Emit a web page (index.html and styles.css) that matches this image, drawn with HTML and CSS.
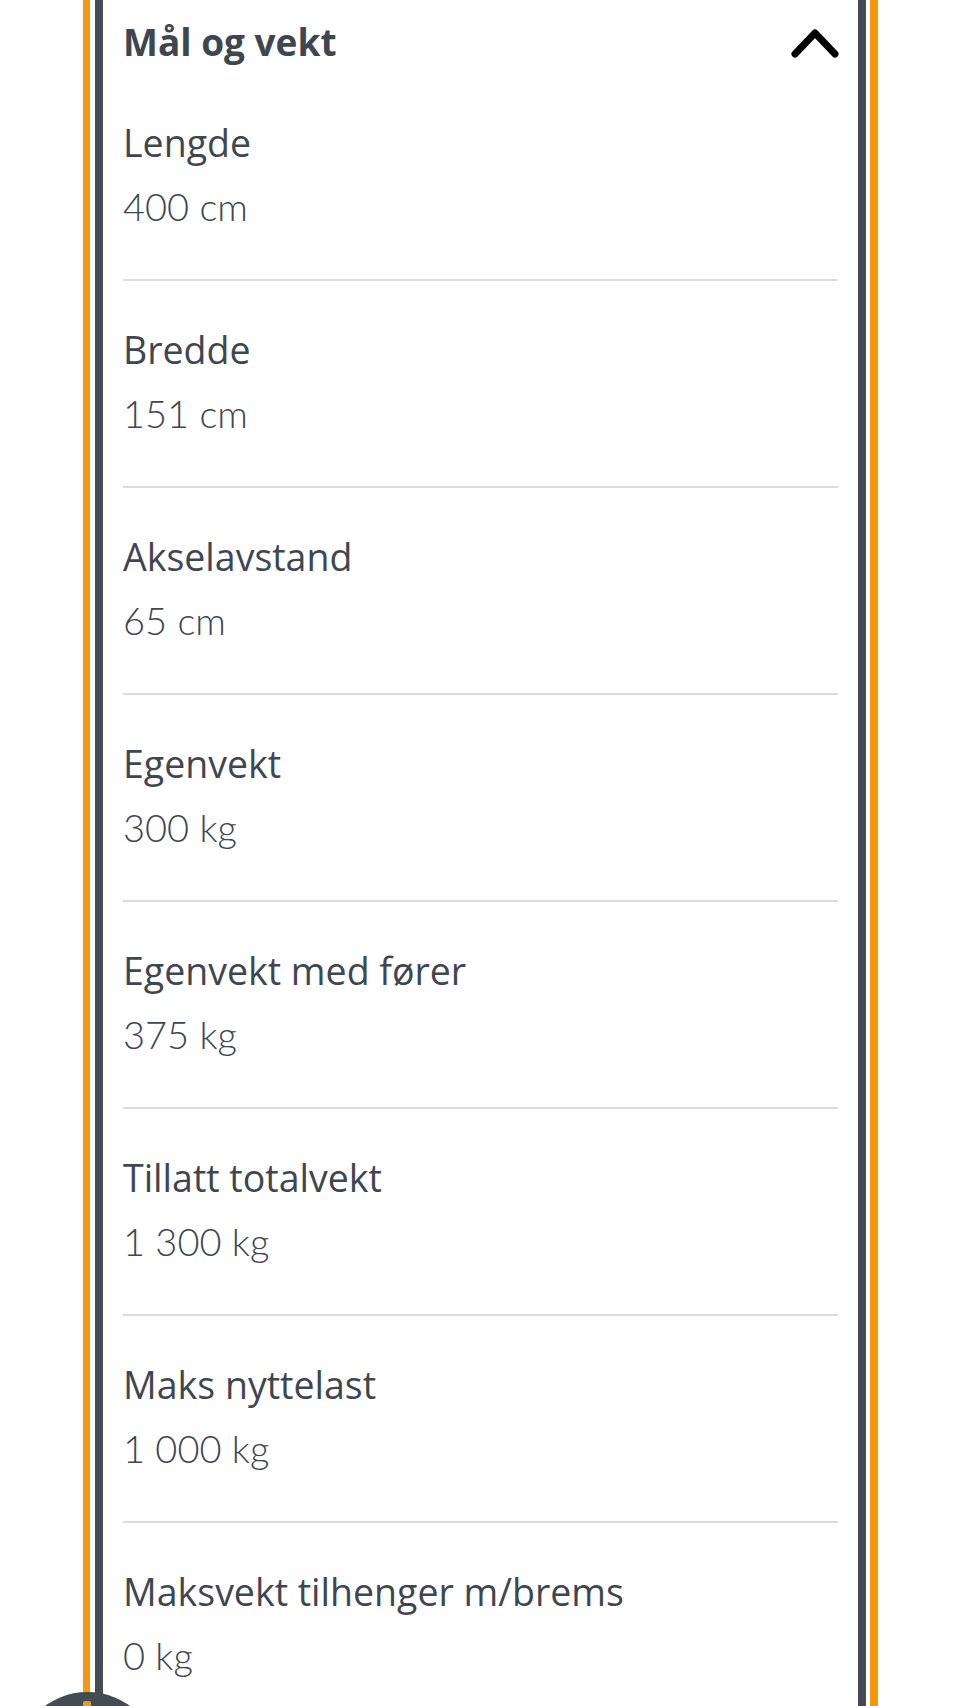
FILE: index.html
```html
<!DOCTYPE html>
<html>
<head>
  <title>Mål og vekt</title>
  <meta charset="UTF-8">
  <meta name="viewport" content="width=device-width, initial-scale=1.0">
  <link rel="stylesheet" href="styles.css">
</head>
<body>
  <div class="screen">
    <div class="frame">
      <div class="panel">
        <div class="panel-head">
          <h2>Mål og vekt</h2>
          <svg class="chevron" width="50" height="34" viewBox="0 0 50 34">
            <path d="M5 29 L25 8 L45 29" fill="none" stroke="#000" stroke-width="7" stroke-linecap="round" stroke-linejoin="round"/>
          </svg>
        </div>

        <div class="item"><div class="label">Lengde</div><div class="value">400 cm</div></div>
        <div class="item"><div class="label">Bredde</div><div class="value">151 cm</div></div>
        <div class="item"><div class="label">Akselavstand</div><div class="value">65 cm</div></div>
        <div class="item"><div class="label">Egenvekt</div><div class="value">300 kg</div></div>
        <div class="item"><div class="label">Egenvekt med fører</div><div class="value">375 kg</div></div>
        <div class="item"><div class="label">Tillatt totalvekt</div><div class="value">1 300 kg</div></div>
        <div class="item"><div class="label">Maks nyttelast</div><div class="value">1 000 kg</div></div>
        <div class="item last"><div class="label">Maksvekt tilhenger m/brems</div><div class="value">0 kg</div></div>
      </div>
    </div>

    <!-- round button peeking in at the bottom -->
    <div class="fab"><span class="fab-mark"></span></div>
  </div>
</body>
</html>
```

FILE: styles.css
```css
body { margin: 0; background: #fff; font-family: Lato, "Noto Sans", sans-serif; color: #3e4750; }
.screen { position: relative; height: 1706px; overflow: hidden; }
.frame { margin-left: 83px; width: 780px; height: 100%; border-left: 7px solid #f7960f; border-right: 8px solid #f7960f; }
.panel { margin: 0 4px 0 5px; height: 100%; border-left: 8px solid #434c54; border-right: 8px solid #434c54; padding: 0 20px; }
.panel-head { display: flex; justify-content: space-between; align-items: center; padding-top: 10px; height: 64px; }
h2 { margin: 0; font-family: "Open Sans", Lato, sans-serif; font-size: 37px; line-height: 64px; font-weight: 700; color: #3e4750; }
.chevron { margin-right: -2px; }
.item { padding: 37px 0 42px; border-bottom: 2px solid #dcdcdc; }
.item.last { border-bottom: none; }
.label { font-family: "Open Sans", Lato, sans-serif; font-size: 37.5px; line-height: 64px; font-weight: 400; }
.value { font-size: 38px; line-height: 62px; font-weight: 300; }
.fab { position: absolute; left: 16px; top: 1692px; width: 143px; height: 143px; border-radius: 50%; background: #434c54; }
.fab-mark { position: absolute; left: 67px; top: 9px; width: 8px; height: 12px; background: #f7960f; border-radius: 2px; }
```
